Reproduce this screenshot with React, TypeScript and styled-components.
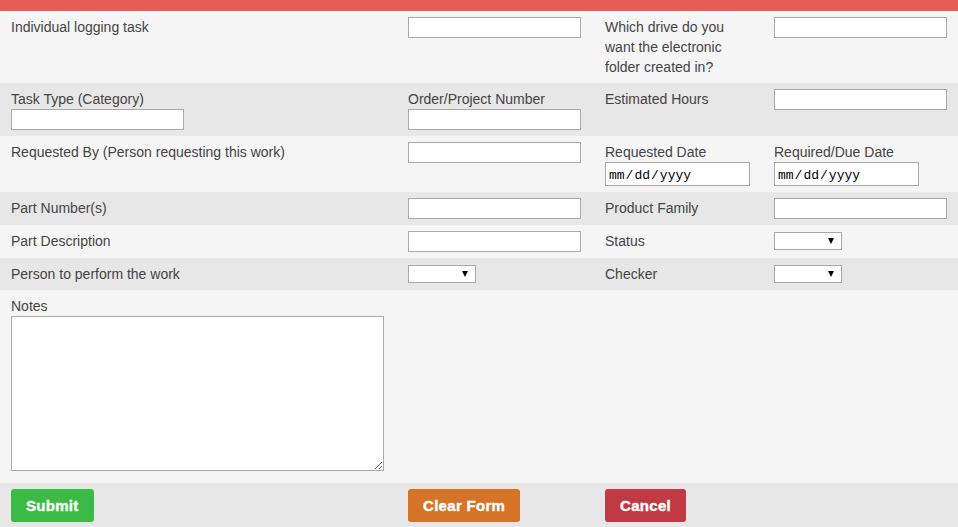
import React from "react"
import styled, { createGlobalStyle } from "styled-components"

const GlobalStyle = createGlobalStyle`
    html, body {
        margin: 0;
        padding: 0;
        background: #f5f5f5;
    }
    body {
        font-family: "Liberation Sans", Arial, sans-serif;
        font-size: 14px;
        color: #444;
    }
`

const TopBar = styled.div`
    height: 11px;
    background: #e35e57;
`

const Row = styled.div<{ $shade?: boolean }>`
    display: grid;
    grid-template-columns: 397px 197px 169px 1fr;
    padding: 6px 11px;
    background: ${p => (p.$shade ? "#e7e7e7" : "#f5f5f5")};
`

const Cell = styled.div`
    padding-right: 24px;
    min-width: 0;
`

const Label = styled.div`
    line-height: 20px;
`

const TextInput = styled.input`
    box-sizing: border-box;
    display: block;
    width: 173px;
    height: 21px;
    margin: 0;
    border: 1px solid #a9a9a9;
    background: #fff;
    padding: 1px 3px;
    font: 13px "Liberation Sans", Arial, sans-serif;
`

const DateInput = styled.input`
    box-sizing: border-box;
    display: block;
    width: 145px;
    height: 24px;
    margin: 0;
    border: 1px solid #a9a9a9;
    background: #fff;
    padding: 2px 2px 0;
    color: #000;
    font: 13px "Liberation Mono", "DejaVu Sans Mono", monospace;
    &::-webkit-calendar-picker-indicator {
        display: none;
    }
    &::-webkit-datetime-edit {
        padding: 0;
    }
`

const SelectWrap = styled.div<{ $top?: number }>`
    position: relative;
    width: 68px;
    height: 18px;
    margin-top: ${p => p.$top ?? 0}px;
    &::after {
        content: "";
        position: absolute;
        right: 8px;
        top: 6px;
        border-left: 3.5px solid transparent;
        border-right: 3.5px solid transparent;
        border-top: 6px solid #000;
        pointer-events: none;
    }
`

const Select = styled.select`
    appearance: none;
    box-sizing: border-box;
    display: block;
    width: 68px;
    height: 18px;
    margin: 0;
    border: 1px solid #a9a9a9;
    border-radius: 0;
    background: #fff;
    font: 13px "Liberation Sans", Arial, sans-serif;
`

const NotesArea = styled.textarea`
    box-sizing: border-box;
    display: block;
    width: 373px;
    height: 155px;
    margin: 0 0 6px;
    border: 1px solid #a9a9a9;
    background: #fff;
    font: 13px "Liberation Sans", Arial, sans-serif;
`

const Button = styled.button<{ $color: string }>`
    height: 33px;
    padding: 0 15px;
    border: none;
    border-radius: 3px;
    background: ${p => p.$color};
    color: #fff;
    font: bold 15px "Liberation Sans", Arial, sans-serif;
    letter-spacing: 0.3px;
    -webkit-text-stroke: 0.4px #fff;
    cursor: pointer;
`

const Dropdown: React.FC<{ top?: number }> = ({ top }) => (
    <SelectWrap $top={top}>
        <Select>
            <option></option>
        </Select>
    </SelectWrap>
)

export default function App() {
    return (
        <>
            <GlobalStyle />
            <TopBar />
            <Row>
                <Cell><Label>Individual logging task</Label></Cell>
                <Cell><TextInput /></Cell>
                <Cell><Label>Which drive do you want the electronic folder created in?</Label></Cell>
                <Cell><TextInput /></Cell>
            </Row>
            <Row $shade>
                <Cell>
                    <Label>Task Type (Category)</Label>
                    <TextInput />
                </Cell>
                <Cell>
                    <Label>Order/Project Number</Label>
                    <TextInput />
                </Cell>
                <Cell><Label>Estimated Hours</Label></Cell>
                <Cell><TextInput /></Cell>
            </Row>
            <Row>
                <Cell><Label>Requested By (Person requesting this work)</Label></Cell>
                <Cell><TextInput /></Cell>
                <Cell>
                    <Label>Requested Date</Label>
                    <DateInput type="date" />
                </Cell>
                <Cell>
                    <Label>Required/Due Date</Label>
                    <DateInput type="date" />
                </Cell>
            </Row>
            <Row $shade>
                <Cell><Label>Part Number(s)</Label></Cell>
                <Cell><TextInput /></Cell>
                <Cell><Label>Product Family</Label></Cell>
                <Cell><TextInput /></Cell>
            </Row>
            <Row>
                <Cell><Label>Part Description</Label></Cell>
                <Cell><TextInput /></Cell>
                <Cell><Label>Status</Label></Cell>
                <Cell><Dropdown top={1} /></Cell>
            </Row>
            <Row $shade>
                <Cell><Label>Person to perform the work</Label></Cell>
                <Cell><Dropdown top={1} /></Cell>
                <Cell><Label>Checker</Label></Cell>
                <Cell><Dropdown top={1} /></Cell>
            </Row>
            <Row>
                <Cell>
                    <Label>Notes</Label>
                    <NotesArea />
                </Cell>
            </Row>
            <Row $shade>
                <Cell><Button $color="#3bba46">Submit</Button></Cell>
                <Cell><Button $color="#d57326">Clear Form</Button></Cell>
                <Cell><Button $color="#c13943">Cancel</Button></Cell>
                <Cell />
            </Row>
        </>
    )
}
